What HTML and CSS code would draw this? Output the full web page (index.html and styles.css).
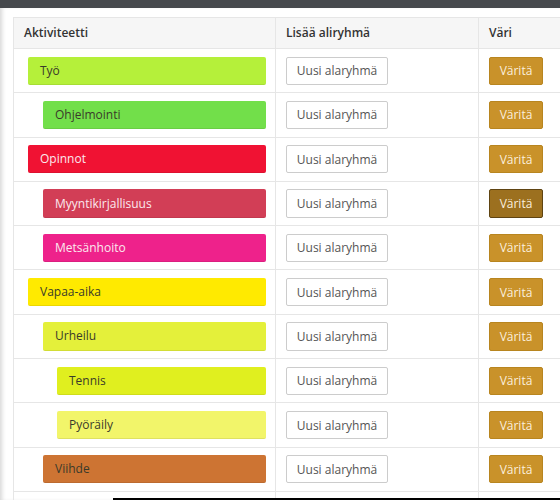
FILE: index.html
```html
<!DOCTYPE html>
<html lang="fi">
<head>
<meta charset="utf-8">
<title>Aktiviteetit</title>
<link rel="stylesheet" href="styles.css">
</head>
<body>
<div class="topbar"></div>
<div class="page">
  <table class="activities">
    <colgroup>
      <col class="col-name">
      <col class="col-add">
      <col class="col-color">
    </colgroup>
    <thead>
      <tr>
        <th>Aktiviteetti</th>
        <th>Lisää aliryhmä</th>
        <th>Väri</th>
      </tr>
    </thead>
    <tbody>
      <tr>
        <td><div class="tag lvl0 c-tyo">Työ</div></td>
        <td><button class="btn-add">Uusi alaryhmä</button></td>
        <td><button class="btn-color">Väritä</button></td>
      </tr>
      <tr>
        <td><div class="tag lvl1 c-ohj">Ohjelmointi</div></td>
        <td><button class="btn-add">Uusi alaryhmä</button></td>
        <td><button class="btn-color">Väritä</button></td>
      </tr>
      <tr>
        <td><div class="tag lvl0 c-opi light">Opinnot</div></td>
        <td><button class="btn-add">Uusi alaryhmä</button></td>
        <td><button class="btn-color">Väritä</button></td>
      </tr>
      <tr>
        <td><div class="tag lvl1 c-myy light">Myyntikirjallisuus</div></td>
        <td><button class="btn-add">Uusi alaryhmä</button></td>
        <td><button class="btn-color active">Väritä</button></td>
      </tr>
      <tr>
        <td><div class="tag lvl1 c-met light">Metsänhoito</div></td>
        <td><button class="btn-add">Uusi alaryhmä</button></td>
        <td><button class="btn-color">Väritä</button></td>
      </tr>
      <tr>
        <td><div class="tag lvl0 c-vap">Vapaa-aika</div></td>
        <td><button class="btn-add">Uusi alaryhmä</button></td>
        <td><button class="btn-color">Väritä</button></td>
      </tr>
      <tr>
        <td><div class="tag lvl1 c-urh">Urheilu</div></td>
        <td><button class="btn-add">Uusi alaryhmä</button></td>
        <td><button class="btn-color">Väritä</button></td>
      </tr>
      <tr>
        <td><div class="tag lvl2 c-ten">Tennis</div></td>
        <td><button class="btn-add">Uusi alaryhmä</button></td>
        <td><button class="btn-color">Väritä</button></td>
      </tr>
      <tr>
        <td><div class="tag lvl2 c-pyo">Pyöräily</div></td>
        <td><button class="btn-add">Uusi alaryhmä</button></td>
        <td><button class="btn-color">Väritä</button></td>
      </tr>
      <tr>
        <td><div class="tag lvl1 c-vii">Viihde</div></td>
        <td><button class="btn-add">Uusi alaryhmä</button></td>
        <td><button class="btn-color">Väritä</button></td>
      </tr>
      <tr class="empty">
        <td></td><td></td><td></td>
      </tr>
    </tbody>
  </table>
  <div class="picker"></div>
</div>
</body>
</html>
```

FILE: styles.css
```css
html, body {
  margin: 0;
  padding: 0;
  background: #ffffff;
  overflow: hidden;
}
body {
  font-family: "Open Sans", "Noto Sans", sans-serif;
  font-size: 12px;
  color: #333333;
  width: 560px;
  height: 500px;
}
.topbar {
  height: 8px;
  background: #46494d;
}
.page {
  position: relative;
  padding: 9px 0 0 13px;
  height: 483px;
  box-shadow: inset 4px 0 4px -2px rgba(0, 0, 0, 0.16);
}
.activities {
  border-collapse: collapse;
  table-layout: fixed;
  width: 600px;
}
.col-name { width: 262px; }
.col-add { width: 203px; }
.col-color { width: 135px; }
.activities th,
.activities td {
  border: 1px solid #e6e6e6;
  text-align: left;
  vertical-align: middle;
}
.activities th {
  background: #f6f6f6;
  font-weight: 600;
  font-size: 12px;
  color: #333;
  padding: 5px 10px;
  line-height: 20px;
}
.activities td {
  padding: 7.5px 10px;
}
.tag {
  box-sizing: border-box;
  height: 28.3px;
  display: flex;
  align-items: center;
  padding-left: 12px;
  border-radius: 2px;
  border-bottom: 1px solid rgba(0, 0, 0, 0.08);
  color: #3a3a2a;
}
.tag.light { color: #fbe9ee; }
.lvl0 { margin-left: 4px; margin-right: -1px; }
.lvl1 { margin-left: 19px; margin-right: -1px; }
.lvl2 { margin-left: 33px; margin-right: -1px; }

.c-tyo { background: #b5f03a; }
.c-ohj { background: #72df4a; }
.c-opi { background: #f01233; }
.c-myy { background: #d23e56; }
.c-met { background: #ee228b; }
.c-vap { background: #ffea00; }
.c-urh { background: #e4f03a; }
.c-ten { background: #e0ef1f; }
.c-pyo { background: #f2f56a; }
.c-vii { background: #cd7433; }

.btn-add,
.btn-color {
  box-sizing: border-box;
  height: 28.3px;
  font-family: "Open Sans", "Noto Sans", sans-serif;
  font-size: 12px;
  border-radius: 2px;
  padding: 0;
  display: block;
  cursor: pointer;
}
.btn-add {
  width: 102px;
  background: #ffffff;
  border: 1px solid #cccccc;
  color: #555555;
}
.btn-color {
  width: 54px;
  background: #c9922a;
  border: 1px solid #b8851f;
  color: #fbeedd;
}
.btn-color.active {
  background: #9c701f;
  border-color: #5f4412;
}
.empty td {
  height: 30px;
}
.picker {
  position: absolute;
  left: 113px;
  top: 490px;
  width: 460px;
  height: 20px;
  background: #ffffff;
  border-top: 2px solid #000000;
}
```
